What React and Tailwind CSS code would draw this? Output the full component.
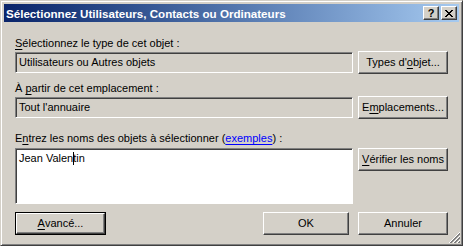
import React from "react";

const btn =
  "flex items-center justify-center bg-[#d4d0c8] border border-t-white border-l-white border-r-[#404040] border-b-[#404040] shadow-[inset_-1px_-1px_#808080] text-black";
const sunken =
  "border border-t-[#808080] border-l-[#808080] border-r-white border-b-white shadow-[inset_1px_1px_#404040]";

function U({ children }) {
  return <span className="underline underline-offset-[2px]">{children}</span>;
}

export default function App() {
  return (
    <div
      className="w-[463px] h-[246px] bg-[#d4d0c8] border border-t-[#d4d0c8] border-l-[#d4d0c8] border-r-[#404040] border-b-[#404040] shadow-[inset_1px_1px_#ffffff,inset_-1px_-1px_#808080] p-[3px] flex flex-col text-[11px] leading-[13px] text-black relative"
      style={{ fontFamily: '"Liberation Sans", Arial, sans-serif' }}
    >
      {/* Title bar */}
      <div className="h-[18px] flex items-center bg-gradient-to-r from-[#0a246a] to-[#a6caf0] pl-[2px] pr-[2px]">
        <span
          className="text-white font-bold text-[11.6px] flex-1 whitespace-nowrap"
          style={{ fontFamily: '"Liberation Sans", Arial, sans-serif' }}
        >
          Sélectionnez Utilisateurs, Contacts ou Ordinateurs
        </span>
        <div className={btn + " w-[16px] h-[14px] font-bold text-[11px]"}>?</div>
        <div className={btn + " w-[16px] h-[14px] ml-[2px]"}>
          <svg width="8" height="7" viewBox="0 0 8 7">
            <path d="M0 0h2v1h-2zM6 0h2v1h-2zM1 1h2v1h-2zM5 1h2v1h-2zM2 2h4v1h-4zM3 3h2v1h-2zM2 4h4v1h-4zM1 5h2v1h-2zM5 5h2v1h-2zM0 6h2v1h-2zM6 6h2v1h-2z" fill="#000" />
          </svg>
        </div>
      </div>

      {/* Body */}
      <div className="flex flex-col px-[11px] pt-[15px]">
        <div className="h-[13px] whitespace-nowrap">
          <U>S</U>électionnez le type de cet objet :
        </div>
        <div className="flex items-center mt-[1px] h-[23px]">
          <div className={sunken + " w-[338px] h-[21px] flex items-center pl-[3px] bg-[#d4d0c8]"}>
            Utilisateurs ou Autres objets
          </div>
          <div className={btn + " ml-[5px] w-[90px] h-[23px]"}>
            Types d'<U>o</U>bjet...
          </div>
        </div>

        <div className="h-[13px] mt-[8px] whitespace-nowrap">
          À <U>p</U>artir de cet emplacement :
        </div>
        <div className="flex items-center mt-[1px] h-[23px]">
          <div className={sunken + " w-[338px] h-[21px] flex items-center pl-[3px] bg-[#d4d0c8]"}>
            Tout l'annuaire
          </div>
          <div className={btn + " ml-[5px] w-[90px] h-[23px]"}>
            E<U>m</U>placements...
          </div>
        </div>

        <div className="h-[13px] mt-[13px] whitespace-nowrap">
          E<U>n</U>trez les noms des objets à sélectionner (
          <span className="text-[#0000ff] underline underline-offset-[2px]">exemples</span>) :
        </div>
        <div className="flex items-start mt-[3px]">
          <div className={sunken + " w-[338px] h-[56px] bg-white pl-[3px] pt-[3px] whitespace-pre"}>
            Jean Valen
            <span className="inline-block w-[1px] h-[13px] bg-black align-top -mr-[1px]" />
            tin
          </div>
          <div className={btn + " ml-[5px] w-[90px] h-[23px]"}>
            <U>V</U>érifier les noms
          </div>
        </div>

        <div className="flex items-center mt-[8px]">
          <div className="w-[91px] h-[23px] border border-black">
            <div className={btn + " w-full h-full"}>
              <U>A</U>vancé...
            </div>
          </div>
          <div className="flex-1" />
          <div className={btn + " w-[86px] h-[23px]"}>OK</div>
          <div className={btn + " ml-[9px] w-[90px] h-[23px]"}>Annuler</div>
        </div>
      </div>

      {/* resize grip */}
      <svg className="absolute right-[1px] bottom-[1px]" width="13" height="13" viewBox="0 0 13 13">
        <path d="M12 1L1 12M12 5L5 12M12 9L9 12" stroke="#ffffff" strokeWidth="1" />
        <path d="M12 2L2 12M12 3L3 12M12 6L6 12M12 7L7 12M12 10L10 12M12 11L11 12" stroke="#808080" strokeWidth="1" />
      </svg>
    </div>
  );
}
